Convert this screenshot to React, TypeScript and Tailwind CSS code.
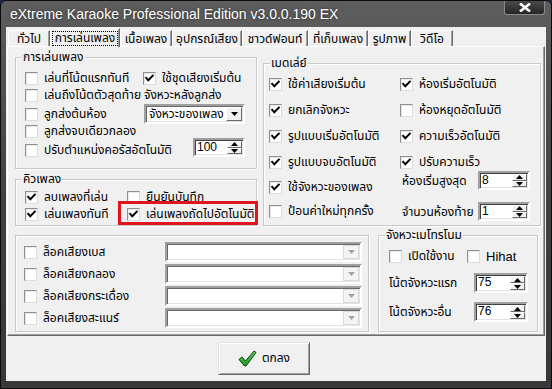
import React from "react";

function Box({ checked }: { checked?: boolean }) {
  return (
    <span className="relative block w-[13px] h-[13px] shrink-0 bg-white border border-t-[#8f8f8f] border-l-[#8f8f8f] border-r-[#dcdcdc] border-b-[#dcdcdc] shadow-[inset_1px_1px_0_#e8e8e8]">
      {checked && (
        <svg className="absolute left-0 top-0" width="11" height="11" viewBox="0 0 11 11">
          <path d="M2.2 4.8 L4.3 7.2 L8.8 2.6" stroke="#000" strokeWidth="2" fill="none" strokeLinecap="square" />
        </svg>
      )}
    </span>
  );
}

function CB({ label, checked, className = "" }: { label: string; checked?: boolean; className?: string }) {
  return (
    <div className={"flex items-center gap-[6px] h-[13px] whitespace-nowrap " + className}>
      <Box checked={checked} />
      <span className="leading-[13px]">{label}</span>
    </div>
  );
}

function Group({ title, className = "", children }: { title?: string; className?: string; children?: React.ReactNode }) {
  return (
    <div className={"relative shrink-0 border border-[#c9c9c9] shadow-[inset_1px_1px_0_#ffffff,1px_1px_0_#ffffff] " + className}>
      {title && (
        <span className="absolute -top-[8px] left-[6px] bg-[#f0f0f0] px-[1px] leading-[14px] whitespace-nowrap">{title}</span>
      )}
      {children}
    </div>
  );
}

function SpinBtns() {
  return (
    <div className="flex flex-col w-[15px] h-full shrink-0 ml-auto">
      <div className="flex-1 flex items-center justify-center bg-[#f0f0f0] border border-t-white border-l-white border-r-[#696969] border-b-[#696969]">
        <svg width="7" height="4" viewBox="0 0 7 4"><path d="M0 4 L3.5 0 L7 4 Z" fill="#000" /></svg>
      </div>
      <div className="flex-1 flex items-center justify-center bg-[#f0f0f0] border border-t-white border-l-white border-r-[#696969] border-b-[#696969]">
        <svg width="7" height="4" viewBox="0 0 7 4"><path d="M0 0 L7 0 L3.5 4 Z" fill="#000" /></svg>
      </div>
    </div>
  );
}

function Spin({ value, className = "" }: { value: string; className?: string }) {
  return (
    <div className={"flex shrink-0 bg-white border-2 border-t-[#a0a0a0] border-l-[#a0a0a0] border-b-white border-r-white shadow-[inset_1px_1px_0_#404040,inset_-1px_-1px_0_#e3e3e3] p-[1px] " + className}>
      <span className="pl-[1px] leading-[13px] text-[12px] font-['Liberation_Sans',sans-serif]">{value}</span>
      <SpinBtns />
    </div>
  );
}

function Select({ value, className = "", disabled }: { value?: string; className?: string; disabled?: boolean }) {
  return (
    <div className={"flex shrink-0 bg-white border-2 border-t-[#a0a0a0] border-l-[#a0a0a0] border-b-white border-r-white shadow-[inset_1px_1px_0_#696969,inset_-1px_-1px_0_#e3e3e3] p-[1px] " + className}>
      <span className="pl-[2px] flex items-center leading-[13px]">{value}</span>
      {disabled ? (
        <div className="ml-auto w-[16px] h-full flex items-center justify-center bg-[#f4f4f4] border border-[#dadada]">
          <svg width="7" height="4" viewBox="0 0 7 4"><path d="M0 0 L7 0 L3.5 4 Z" fill="#a3a3a3" /></svg>
        </div>
      ) : (
        <div className="ml-auto w-[16px] h-full flex items-center justify-center bg-[#f0f0f0] border border-t-white border-l-white border-r-[#696969] border-b-[#696969]">
          <svg width="7" height="4" viewBox="0 0 7 4"><path d="M0 0 L7 0 L3.5 4 Z" fill="#000" /></svg>
        </div>
      )}
    </div>
  );
}

const tabs: { label: string; w: string; active?: boolean }[] = [
  { label: "ทั่วไป", w: "w-[42px]" },
  { label: "การเล่นเพลง", w: "w-[70px]", active: true },
  { label: "เนื้อเพลง", w: "w-[52px]" },
  { label: "อุปกรณ์เสียง", w: "w-[70px]" },
  { label: "ชาวด์ฟอนท์", w: "w-[66px]" },
  { label: "ที่เก็บเพลง", w: "w-[60px]" },
  { label: "รูปภาพ", w: "w-[43px]" },
  { label: "วิดีโอ", w: "w-[42px]" },
];

export default function App() {
  return (
    <div className="w-[552px] h-[389px] overflow-hidden bg-[#1b2a44] font-['Tahoma','Noto_Sans_Thai','Noto_Sans',sans-serif] text-[12px] text-black">
      <div className="w-full h-full flex flex-col rounded-t-[6px] border border-[#0c0c0c] bg-gradient-to-b from-[#5e5e5e] via-[#414141] to-[#383838]">
        {/* title bar */}
        <div className="h-[26px] flex shrink-0">
          <div className="pl-[9px] pt-[5px] text-white text-[14px] leading-[16px] font-['Liberation_Sans',sans-serif] whitespace-nowrap [text-shadow:0_0_3px_rgba(0,0,0,0.6)]">
            eXtreme Karaoke Professional Edition v3.0.0.190 EX
          </div>
          <div className="ml-auto mr-[6px] w-[41px] h-[14px] flex items-center justify-center rounded-b-[3px] border border-t-0 border-[#8a8a8a] bg-gradient-to-b from-[#4a4a4a] to-[#262626]">
            <svg width="12" height="9" viewBox="0 0 12 9">
              <path d="M1 0.5 L11 8.5 M11 0.5 L1 8.5" stroke="#ffffff" strokeWidth="2.6" />
            </svg>
          </div>
        </div>
        {/* client */}
        <div className="mx-[5px] h-[354px] shrink-0 bg-[#f0f0f0] flex flex-col">
          {/* tabs */}
          <div className="flex items-end h-[19px] pl-[2px] shrink-0 relative z-10">
            {tabs.map((t) =>
              t.active ? (
                <div key={t.label} className={"h-[19px] -mb-[1px] flex items-center justify-center bg-[#f0f0f0] border-t border-l border-t-white border-l-white border-r border-r-[#696969] shadow-[inset_-1px_0_0_#a0a0a0] " + t.w}>
                  <span className="px-[2px] leading-[13px] border border-dotted border-black whitespace-nowrap">{t.label}</span>
                </div>
              ) : (
                <div key={t.label} className={"h-[16px] flex items-center justify-center bg-[#f0f0f0] border-t border-l border-t-white border-l-white border-r border-r-[#696969] shadow-[inset_-1px_0_0_#a0a0a0] whitespace-nowrap " + t.w}>
                  {t.label}
                </div>
              )
            )}
          </div>
          {/* panel */}
          <div className="ml-[1px] w-[538px] h-[290px] shrink-0 border border-t-white border-l-white border-r-[#696969] border-b-[#696969] shadow-[inset_-1px_-1px_0_#a0a0a0] pl-[7px] pt-[10px] flex flex-col">
            <div className="flex">
              <div className="flex flex-col w-[242px]">
                <Group title="การเล่นเพลง" className="w-[242px] h-[112px] pl-[9px] pr-[11px] pt-[11px]">
                  <div className="flex items-center h-[18px]">
                    <CB label="เล่นที่โน้ตแรกทันที" className="w-[118px]" />
                    <CB label="ใช้ชุดเสียงเริ่มต้น" checked />
                  </div>
                  <div className="flex items-center h-[17px]">
                    <CB label="เล่นถึงโน้ตตัวสุดท้าย" className="w-[119px]" />
                    <span className="leading-[13px] whitespace-nowrap">จังหวะหลังลูกส่ง</span>
                  </div>
                  <div className="flex items-center h-[20px]">
                    <CB label="ลูกส่งต้นห้อง" className="w-[120px]" />
                    <Select value="จังหวะของเพลง" className="w-[101px] h-[20px]" />
                  </div>
                  <div className="flex items-center h-[14px]">
                    <CB label="ลูกส่งจบเดียวกลอง" />
                  </div>
                  <div className="flex h-[24px]">
                    <CB label="ปรับตำแหน่งคอรัสอัตโนมัติ" className="self-center" />
                    <Spin value="100" className="ml-auto w-[52px] h-[19px]" />
                  </div>
                </Group>
                <Group title="คิวเพลง" className="mt-[10px] w-[242px] h-[47px] pl-[9px] pt-[9px]">
                  <div className="flex items-center h-[17px]">
                    <CB label="ลบเพลงที่เล่น" checked className="w-[102px]" />
                    <CB label="ยืนยันบันทึก" />
                  </div>
                  <div className="flex items-center h-[17px]">
                    <CB label="เล่นเพลงทันที" checked className="w-[102px]" />
                    <CB label="เล่นเพลงถัดไปอัตโนมัติ" checked />
                  </div>
                  <div className="absolute left-[102px] top-[21px] w-[140px] h-[24px] border-[3px] border-[#e0141e]" />
                </Group>
              </div>
              <Group title="เมดเล่ย์" className="ml-[6px] mt-[6px] w-[278px] h-[163px] flex">
                <div className="flex flex-col w-[136px] pl-[5px] pt-[14px]">
                  <CB label="ใช้ค่าเสียงเริ่มต้น" checked />
                  <CB label="ยกเลิกจังหวะ" checked className="mt-[13px]" />
                  <CB label="รูปแบบเริ่มอัตโนมัติ" checked className="mt-[13px]" />
                  <CB label="รูปแบบจบอัตโนมัติ" checked className="mt-[13px]" />
                  <CB label="ใช้จังหวะของเพลง" checked className="mt-[12px]" />
                  <CB label="ป้อนค่าใหม่ทุกครั้ง" className="mt-[11px]" />
                </div>
                <div className="flex flex-col w-[130px] pt-[14px]">
                  <CB label="ห้องเริ่มอัตโนมัติ" checked />
                  <CB label="ห้องหยุดอัตโนมัติ" className="mt-[13px]" />
                  <CB label="ความเร็วอัตโนมัติ" checked className="mt-[13px]" />
                  <CB label="ปรับความเร็ว" checked className="mt-[13px]" />
                  <div className="flex items-center h-[19px] mt-[2px] pl-[2px]">
                    <span className="whitespace-nowrap">ห้องเริ่มสูงสุด</span>
                    <Spin value="8" className="ml-auto w-[52px] h-[19px]" />
                  </div>
                  <div className="flex items-center h-[19px] mt-[12px] pl-[2px]">
                    <span className="whitespace-nowrap">จำนวนห้องท้าย</span>
                    <Spin value="1" className="ml-auto w-[52px] h-[19px]" />
                  </div>
                </div>
              </Group>
            </div>
            <div className="flex mt-[9px]">
              <Group className="w-[354px] h-[97px] pl-[8px] pt-[6px]">
                {["ล็อคเสียงเบส", "ล็อคเสียงกลอง", "ล็อคเสียงกระเดื่อง", "ล็อคเสียงสะแนร์"].map((l, i) => (
                  <div key={l} className={"flex items-center h-[20px] " + (i > 0 ? "mt-[2px]" : "")}>
                    <CB label={l} className="w-[141px]" />
                    <Select disabled className="w-[197px] h-[20px]" />
                  </div>
                ))}
              </Group>
              <Group title="จังหวะเมโทรโนม" className="ml-[9px] w-[160px] h-[97px] pl-[10px] pr-[9px] pt-[14px] flex flex-col">
                <div className="flex items-center h-[13px]">
                  <CB label="เปิดใช้งาน" className="w-[78px]" />
                  <CB label="Hihat" className="gap-[4px] font-['Liberation_Sans',sans-serif] text-[13px]" />
                </div>
                <div className="flex items-center h-[20px] mt-[10px]">
                  <span className="whitespace-nowrap">โน้ตจังหวะแรก</span>
                  <Spin value="75" className="ml-auto w-[54px] h-[20px]" />
                </div>
                <div className="flex items-center h-[20px] mt-[9px]">
                  <span className="whitespace-nowrap">โน้ตจังหวะอื่น</span>
                  <Spin value="76" className="ml-auto w-[54px] h-[20px]" />
                </div>
              </Group>
            </div>
          </div>
          {/* bottom buttons */}
          <div className="flex">
            <div className="ml-[212px] mt-[6px] w-[92px] h-[33px] flex items-center justify-center gap-[5px] bg-[#f0f0f0] border border-t-[#e3e3e3] border-l-[#e3e3e3] border-r-[#696969] border-b-[#696969] shadow-[inset_1px_1px_0_#ffffff,inset_-1px_-1px_0_#a0a0a0]">
              <svg width="19" height="17" viewBox="0 0 19 17">
                <defs>
                  <linearGradient id="gchk" x1="0" y1="0" x2="0" y2="1">
                    <stop offset="0" stopColor="#5fd65f" />
                    <stop offset="1" stopColor="#1c9a1c" />
                  </linearGradient>
                </defs>
                <path d="M1 9.5 L4 7 L7.5 11 L16 1 L18 2.5 L8 16 L6.5 16 Z" fill="url(#gchk)" stroke="#0b3d0b" strokeWidth="1" strokeLinejoin="round" />
              </svg>
              <span className="leading-[13px]">ตกลง</span>
            </div>
          </div>
        </div>
      </div>
    </div>
  );
}
